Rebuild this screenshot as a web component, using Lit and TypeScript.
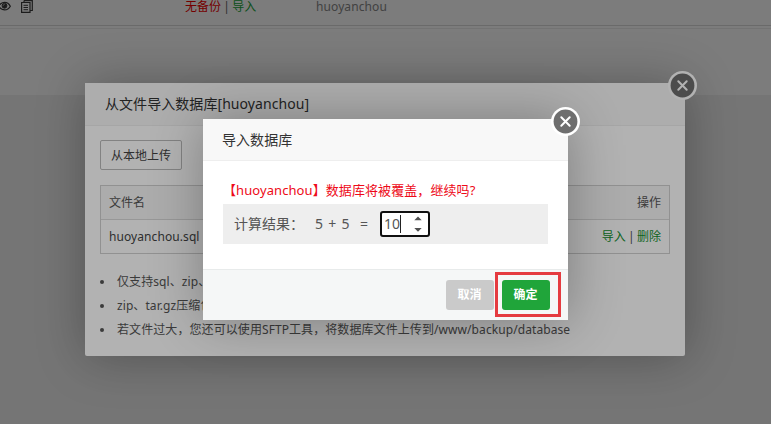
import { LitElement, html, css, svg } from "lit";
import { customElement } from "lit/decorators.js";

const cross = svg`<path d="M8.3 8.3 L16.7 16.7 M16.7 8.3 L8.3 16.7" stroke="#fff" stroke-width="2" stroke-linecap="round"/>`;

@customElement("close-badge")
class CloseBadge extends LitElement {
  static styles = css`
    :host { display: block; width: 29px; height: 29px; }
    svg { display: block; width: 29px; height: 29px; }
  `;
  render() {
    return html`<svg viewBox="-2 -2 29 29" fill="none">
      <circle cx="12.5" cy="12.5" r="14.5" fill="#fff" />
      <circle cx="12.5" cy="12.5" r="11.9" fill="#6e6e6e" />
      ${cross}
    </svg>`;
  }
}

@customElement("app-root")
class AppRoot extends LitElement {
  static styles = css`
    :host {
      display: block;
      position: relative;
      width: 771px;
      height: 424px;
      overflow: hidden;
      background: #f1f1f1;
      color: #555;
      font: 12px/24px "Noto Sans", "Noto Sans CJK SC", sans-serif;
      white-space: nowrap;
    }
    * { box-sizing: border-box; }
    .page { height: 95px; background: #fff; }
    .row {
      display: flex;
      height: 26px;
      padding-bottom: 12px;
      align-items: flex-start;
      border-bottom: 1px solid #dcdcdc;
      color: #666;
      line-height: 13px;
    }
    .gap { height: 3px; border-bottom: 1px solid #ececec; }
    .icons { display: flex; width: 185px; gap: 10px; }
    .icons svg { display: block; }
    .links { width: 131px; }
    .links, .actions { word-spacing: -0.8px; }
    .user { color: #888; letter-spacing: 0.1px; }
    .red { color: #f00000; }
    .green { color: #20a53a; }
    .actions .green { color: #149030; }
    .shade { position: absolute; inset: 0; background: rgba(0, 0, 0, 0.3); }
    .dialog {
      position: absolute;
      background: #fff;
      border-radius: 2px;
      box-shadow: 1px 1px 50px rgba(0, 0, 0, 0.3);
    }
    .first { left: 85px; top: 83px; width: 600px; height: 273px; }
    .second { left: 203px; top: 119px; width: 365px; height: 201px; border-radius: 0; display: flex; flex-direction: column; }
    .title {
      height: 43px;
      padding: 0 20px;
      border-bottom: 1px solid #eee;
      background: #f8f8f8;
      color: #333;
      font-size: 14px;
      line-height: 42px;
      letter-spacing: 0.06px;
    }
    close-badge { position: absolute; right: -12px; top: -12px; }
    .second close-badge { right: -12px; top: -12px; }
    .body { padding: 14px 15px 0; }
    .upload {
      display: block;
      width: 82px;
      height: 30px;
      border: 1px solid #bbb;
      border-radius: 2px;
      line-height: 29px;
      text-align: center;
      color: #444;
    }
    .table { margin-top: 15px; border: 1px solid #d0d0d0; }
    .tr { display: flex; justify-content: space-between; height: 33px; padding: 0 8px; line-height: 33px; }
    .head { height: 34px; border-bottom: 1px solid #d8d8d8; background: #f6f6f6; line-height: 34px; }
    .name { color: #444; letter-spacing: 0.08px; }
    .tips { margin: 16px 0 0; padding: 0; list-style: none; }
    .tips li { display: flex; align-items: center; height: 24px; letter-spacing: 0.08px; }
    .tips li::before { content: ""; width: 4px; height: 4px; margin-right: 13px; border-radius: 50%; background: #555; }
    .second .title { height: 42px; padding: 0 19px; line-height: 41px; }
    .confirm { flex: 1; padding: 17px 20px 0; }
    .warning { height: 26px; color: #ee0a18; font-size: 13px; line-height: 25px; letter-spacing: 0.08px; }
    .sum {
      display: flex;
      align-items: center;
      height: 40px;
      padding-left: 11px;
      background: #eee;
      font-size: 14px;
    }
    .label { width: 81px; }
    .formula { width: 45px; word-spacing: 1.6px; }
    .equals { width: 20px; }
    .number {
      display: flex;
      align-items: center;
      justify-content: space-between;
      width: 50px;
      height: 26px;
      padding: 0 6px 0 2px;
      border: 2px solid #101010;
      border-radius: 3px;
      background: #fff;
    }
    .value { display: flex; align-items: center; height: 18px; border-right: 1px solid #222; }
    .spin { display: block; }
    .foot {
      display: flex;
      justify-content: flex-end;
      gap: 8px;
      height: 51px;
      padding: 10px 18px 0 0;
      border-top: 1px solid #e8ebeb;
      background: #f5f7f7;
    }
    .button {
      width: 48px;
      height: 30px;
      border-radius: 3px;
      background: #cacaca;
      color: #fff;
      font-weight: 700;
      line-height: 29px;
      text-align: center;
      text-indent: -1px;
    }
    .ok { background: #20a53a; }
    .marker { position: absolute; left: 495px; top: 272px; width: 66px; height: 45px; border: 3px solid #e53b40; }
  `;

  render() {
    return html`
      <div class="page">
        <div class="row">
          <div class="icons">
            <svg width="11" height="13" viewBox="0 0 11 13" fill="none" stroke="#3c3c3c">
              <path d="M-1.5 6.2 C2 1.2 7.5 1.2 10.3 6.2 C7.5 11.2 2 11.2 -1.5 6.2 Z" stroke-width="1.3" />
              <circle cx="4.5" cy="5.8" r="2.4" fill="#3c3c3c" />
              <path d="M3.2 5.6 Q3.4 4.4 4.6 4.3" stroke="#ddd" stroke-width=".8" />
            </svg>
            <svg width="12" height="13" viewBox="0 0 12 13" fill="none" stroke="#3c3c3c">
              <path d="M3 .6 H11.3 V10.5 H9 M3 .6 V2" stroke-width="1.2" />
              <path d="M.6 2.5 H9 V12.4 H.6 Z" stroke-width="1.2" />
              <path d="M2.5 5.3 H7 M2.5 7.5 H7 M2.5 9.7 H7" />
            </svg>
          </div>
          <div class="links"><span class="red">无备份</span> | <span class="green">导入</span></div>
          <div class="user">huoyanchou</div>
        </div>
        <div class="gap"></div>
      </div>
      <div class="shade"></div>
      <section class="dialog first">
        <div class="title">从文件导入数据库[huoyanchou]</div>
        <close-badge></close-badge>
        <div class="body">
          <div class="upload">从本地上传</div>
          <div class="table">
            <div class="tr head"><span>文件名</span><span>操作</span></div>
            <div class="tr">
              <span class="name">huoyanchou.sql</span>
              <span class="actions"><span class="green">导入</span> | <span class="green">删除</span></span>
            </div>
          </div>
          <ul class="tips">
            <li>仅支持sql、zip、</li>
            <li>zip、tar.gz压缩包</li>
            <li>若文件过大，您还可以使用SFTP工具，将数据库文件上传到/www/backup/database</li>
          </ul>
        </div>
      </section>
      <div class="shade"></div>
      <section class="dialog second">
        <div class="title">导入数据库</div>
        <close-badge></close-badge>
        <div class="confirm">
          <div class="warning">【huoyanchou】数据库将被覆盖，继续吗?</div>
          <div class="sum">
            <span class="label">计算结果：</span>
            <span class="formula">5 + 5</span>
            <span class="equals">=</span>
            <div class="number">
              <span class="value">10</span>
              <svg class="spin" width="8" height="16" viewBox="0 0 8 16" fill="#505050">
                <path d="M.3 4.2 L4 .5 L7.7 4.2 Z M.3 12 L4 15.7 L7.7 12 Z" />
              </svg>
            </div>
          </div>
        </div>
        <div class="foot">
          <div class="button">取消</div>
          <div class="button ok">确定</div>
        </div>
      </section>
      <div class="marker"></div>
    `;
  }
}
